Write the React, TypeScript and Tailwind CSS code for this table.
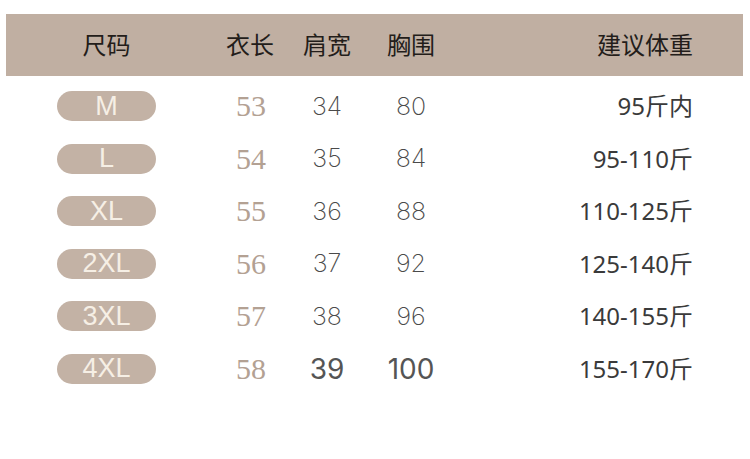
import React from "react";

const rows = [
  { size: "M", len: "53", sh: "34", ch: "80", w: "95斤内", big: false },
  { size: "L", len: "54", sh: "35", ch: "84", w: "95-110斤", big: false },
  { size: "XL", len: "55", sh: "36", ch: "88", w: "110-125斤", big: false },
  { size: "2XL", len: "56", sh: "37", ch: "92", w: "125-140斤", big: false },
  { size: "3XL", len: "57", sh: "38", ch: "96", w: "140-155斤", big: false },
  { size: "4XL", len: "58", sh: "39", ch: "100", w: "155-170斤", big: true },
];

const grid = "grid grid-cols-[201px_86px_68px_100px_232px] items-center";

export default function App() {
  return (
    <div className="w-[750px] h-[459px] bg-white overflow-hidden pt-[14px]">
      <div
        className={`${grid} ml-[6px] w-[737px] h-[62px] bg-[#c0afa2] text-[24px] text-[#231d1a] font-['Noto_Sans_CJK_SC',sans-serif] pb-[3px]`}
      >
        <div className="text-center">尺码</div>
        <div className="text-center">衣长</div>
        <div className="text-center">肩宽</div>
        <div className="text-center">胸围</div>
        <div className="text-right">建议体重</div>
      </div>
      <div className="ml-[6px] pt-[4px]">
        {rows.map((r) => (
          <div key={r.size} className={`${grid} h-[52.5px]`}>
            <div className="flex justify-center">
              <div className="w-[99px] h-[30px] rounded-full bg-[#c3b2a5] flex items-center justify-center text-[27px] leading-none text-[#f6efe5] font-['Liberation_Sans',sans-serif]">
                {r.size}
              </div>
            </div>
            <div className="text-center text-[30px] leading-none text-[#b3a193] font-['Liberation_Serif',serif] pl-[2px]">
              {r.len}
            </div>
            <div
              className={`text-center leading-none font-['Inter',sans-serif] ${
                r.big ? "text-[28px] font-normal text-[#555]" : "text-[25px] font-extralight text-[#4a4a4a]"
              }`}
            >
              {r.sh}
            </div>
            <div
              className={`text-center leading-none font-['Inter',sans-serif] ${
                r.big ? "text-[28px] font-normal text-[#555]" : "text-[25px] font-extralight text-[#4a4a4a]"
              }`}
            >
              {r.ch}
            </div>
            <div className="text-right text-[24px] leading-none text-[#3a3a3a] font-['Noto_Sans','Noto_Sans_CJK_SC',sans-serif]">
              {r.w}
            </div>
          </div>
        ))}
      </div>
    </div>
  );
}
